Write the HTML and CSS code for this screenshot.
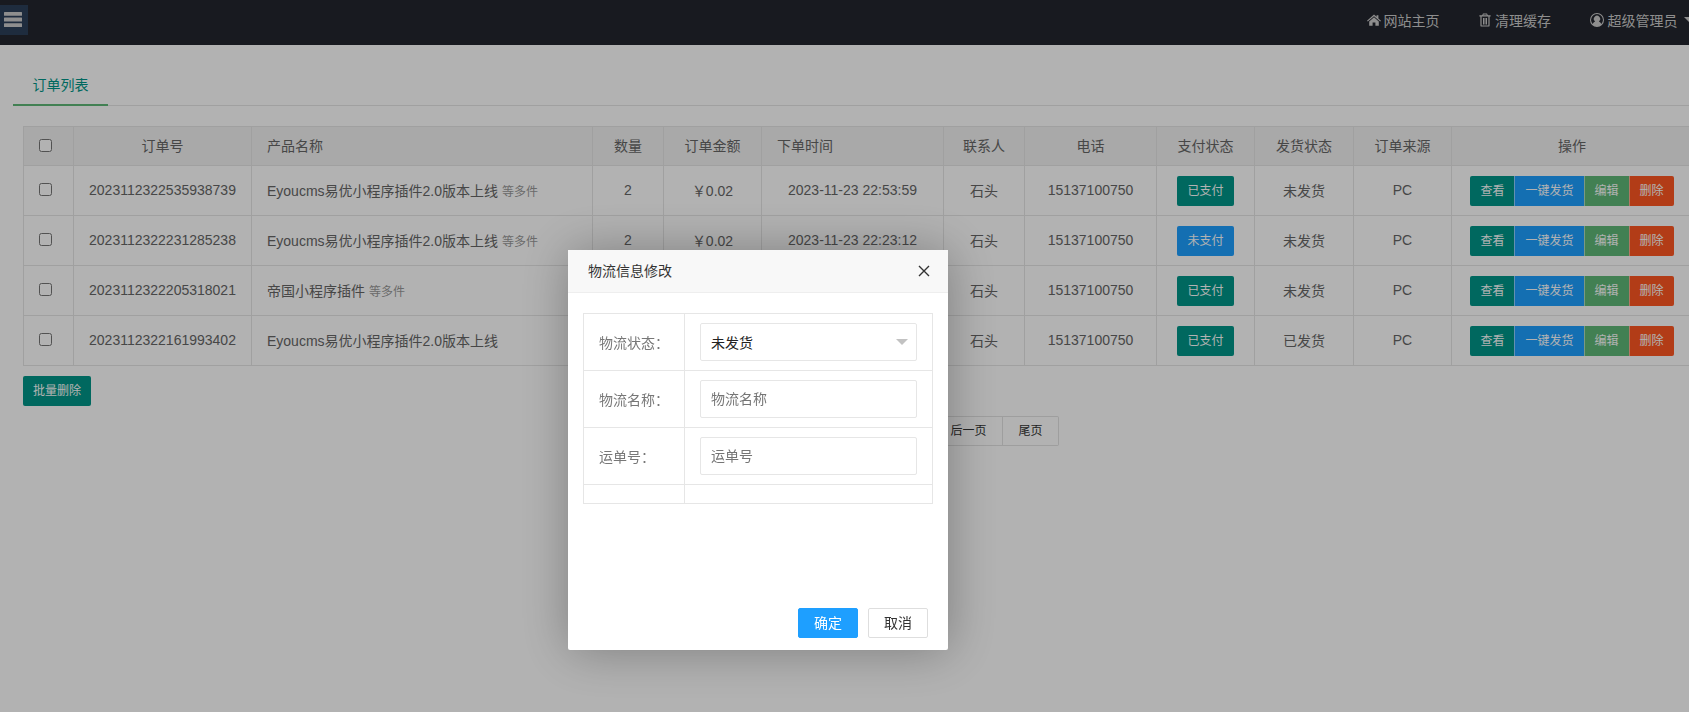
FILE: index.html
```html
<!DOCTYPE html>
<html lang="zh-CN">
<head>
    <meta charset="UTF-8">
    <title>订单列表</title>
    <link rel="stylesheet" href="styles.css">
</head>
<body>
    <!-- Top bar -->
    <header class="topbar">
        <div class="menu-toggle">
            <svg class="menu-icon" viewBox="0 0 18 15"><rect y="0" width="18" height="3.8" rx="0.5"/><rect y="5.6" width="18" height="3.8" rx="0.5"/><rect y="11.2" width="18" height="3.8" rx="0.5"/></svg>
        </div>
        <nav class="top-nav">
            <a href="#" class="top-link">
                <svg class="top-icon" viewBox="0 0 14 12"><path d="M7 0.5 L9.6 2.8 V1.2 H11.4 V4.4 L14 6.7 L13.2 7.6 L7 2.3 L0.8 7.6 L0 6.7 Z M2.2 7.4 L7 3.3 L11.8 7.4 V11.8 H8.4 V8.4 H5.6 V11.8 H2.2 Z"/></svg>
                网站主页
            </a>
            <a href="#" class="top-link">
                <svg class="top-icon" viewBox="0 0 12 14"><path fill-rule="evenodd" d="M4 0.5 H8 L8.8 2.2 H11.6 V3.4 H10.6 V12.4 Q10.6 13.6 9.4 13.6 H2.6 Q1.4 13.6 1.4 12.4 V3.4 H0.4 V2.2 H3.2 Z M4.6 1.4 L4.2 2.2 H7.8 L7.4 1.4 Z M2.6 3.4 V12.4 H9.4 V3.4 Z M4 5 H5 V11.4 H4 Z M5.5 5 H6.5 V11.4 H5.5 Z M7 5 H8 V11.4 H7 Z"/></svg>
                清理缓存
            </a>
            <a href="#" class="top-link">
                <svg class="top-icon user-icon" viewBox="0 0 14 14"><path fill-rule="evenodd" d="M7 0 A7 7 0 1 1 7 14 A7 7 0 1 1 7 0 Z M7 1.1 A5.9 5.9 0 0 0 2.6 10.9 Q3.4 8.9 5.1 8.4 A3.1 3.1 0 1 1 8.9 8.4 Q10.6 8.9 11.4 10.9 A5.9 5.9 0 0 0 7 1.1 Z"/></svg>
                超级管理员
                <span class="caret"></span>
            </a>
        </nav>
    </header>

    <main class="content">
        <div class="tab-title">
            <span class="tab-item">订单列表</span>
        </div>

        <table class="order-table">
            <colgroup>
                <col class="col-check"><col class="col-no"><col class="col-name"><col class="col-qty">
                <col class="col-amount"><col class="col-date"><col class="col-contact"><col class="col-phone">
                <col class="col-pay"><col class="col-ship"><col class="col-source"><col class="col-actions">
            </colgroup>
            <thead>
                <tr>
                    <th class="left"><input type="checkbox"></th>
                    <th>订单号</th>
                    <th class="left">产品名称</th>
                    <th>数量</th>
                    <th>订单金额</th>
                    <th class="left">下单时间</th>
                    <th>联系人</th>
                    <th>电话</th>
                    <th>支付状态</th>
                    <th>发货状态</th>
                    <th>订单来源</th>
                    <th>操作</th>
                </tr>
            </thead>
            <tbody>
                <tr>
                    <td class="left"><input type="checkbox"></td>
                    <td>2023112322535938739</td>
                    <td class="left">Eyoucms易优小程序插件2.0版本上线 <small>等多件</small></td>
                    <td>2</td>
                    <td>￥0.02</td>
                    <td>2023-11-23 22:53:59</td>
                    <td>石头</td>
                    <td>15137100750</td>
                    <td><a href="#" class="btn btn-teal">已支付</a></td>
                    <td>未发货</td>
                    <td>PC</td>
                    <td>
                        <div class="btn-group"><a href="#" class="btn btn-teal">查看</a><a href="#" class="btn btn-blue">一键发货</a><a href="#" class="btn btn-green">编辑</a><a href="#" class="btn btn-orange">删除</a></div>
                    </td>
                </tr>
                <tr>
                    <td class="left"><input type="checkbox"></td>
                    <td>2023112322231285238</td>
                    <td class="left">Eyoucms易优小程序插件2.0版本上线 <small>等多件</small></td>
                    <td>2</td>
                    <td>￥0.02</td>
                    <td>2023-11-23 22:23:12</td>
                    <td>石头</td>
                    <td>15137100750</td>
                    <td><a href="#" class="btn btn-blue">未支付</a></td>
                    <td>未发货</td>
                    <td>PC</td>
                    <td>
                        <div class="btn-group"><a href="#" class="btn btn-teal">查看</a><a href="#" class="btn btn-blue">一键发货</a><a href="#" class="btn btn-green">编辑</a><a href="#" class="btn btn-orange">删除</a></div>
                    </td>
                </tr>
                <tr>
                    <td class="left"><input type="checkbox"></td>
                    <td>2023112322205318021</td>
                    <td class="left">帝国小程序插件 <small>等多件</small></td>
                    <td></td>
                    <td></td>
                    <td></td>
                    <td>石头</td>
                    <td>15137100750</td>
                    <td><a href="#" class="btn btn-teal">已支付</a></td>
                    <td>未发货</td>
                    <td>PC</td>
                    <td>
                        <div class="btn-group"><a href="#" class="btn btn-teal">查看</a><a href="#" class="btn btn-blue">一键发货</a><a href="#" class="btn btn-green">编辑</a><a href="#" class="btn btn-orange">删除</a></div>
                    </td>
                </tr>
                <tr>
                    <td class="left"><input type="checkbox"></td>
                    <td>2023112322161993402</td>
                    <td class="left">Eyoucms易优小程序插件2.0版本上线</td>
                    <td></td>
                    <td></td>
                    <td></td>
                    <td>石头</td>
                    <td>15137100750</td>
                    <td><a href="#" class="btn btn-teal">已支付</a></td>
                    <td>已发货</td>
                    <td>PC</td>
                    <td>
                        <div class="btn-group"><a href="#" class="btn btn-teal">查看</a><a href="#" class="btn btn-blue">一键发货</a><a href="#" class="btn btn-green">编辑</a><a href="#" class="btn btn-orange">删除</a></div>
                    </td>
                </tr>
            </tbody>
        </table>

        <div class="batch-bar">
            <a href="#" class="btn btn-teal">批量删除</a>
        </div>

        <div class="pager">
            <a href="#" class="pager-item">后一页</a>
            <a href="#" class="pager-item pager-short">尾页</a>
        </div>
    </main>

    <!-- Modal -->
    <div class="shade"></div>
    <div class="modal">
        <div class="modal-title">
            <span>物流信息修改</span>
            <svg class="modal-close" viewBox="0 0 12 12"><path d="M1 1 L11 11 M11 1 L1 11"/></svg>
        </div>
        <div class="modal-body">
            <table class="form-table">
                <colgroup><col class="form-label-col"><col></colgroup>
                <tr>
                    <td class="form-label">物流状态：</td>
                    <td>
                        <div class="fake-select">未发货<span class="select-arrow"></span></div>
                    </td>
                </tr>
                <tr>
                    <td class="form-label">物流名称：</td>
                    <td><input class="form-input" type="text" placeholder="物流名称"></td>
                </tr>
                <tr>
                    <td class="form-label">运单号：</td>
                    <td><input class="form-input" type="text" placeholder="运单号"></td>
                </tr>
                <tr class="form-empty">
                    <td></td>
                    <td></td>
                </tr>
            </table>
        </div>
        <div class="modal-footer">
            <a href="#" class="modal-btn modal-btn-primary">确定</a>
            <a href="#" class="modal-btn">取消</a>
        </div>
    </div>
</body>
</html>
```

FILE: styles.css
```css
/* Global Styles */
:root {
    --teal: #009688;
    --blue: #1e9fff;
    --green: #5fb878;
    --orange: #ff5722;
    --border: #e6e6e6;
    --text: #666;
}

html, body {
    height: 100%;
}

body {
    margin: 0;
    overflow: hidden;
    background-color: #fff;
    color: var(--text);
    font-family: "Liberation Sans", "Noto Sans CJK SC", sans-serif;
    font-size: 14px;
}

a {
    text-decoration: none;
    color: inherit;
}

/* Top bar */
.topbar {
    width: 1705px;
    height: 45px;
    display: flex;
    justify-content: space-between;
    background-color: #23262e;
}

.menu-toggle {
    width: 28px;
    height: 30px;
    margin-top: 5px;
    background-color: #2c3f5a;
}

.menu-icon {
    display: block;
    width: 18px;
    height: 15px;
    margin: 7px 0 0 4px;
    fill: #ccc;
}

.top-nav {
    display: flex;
    height: 39px;
    align-items: center;
    padding-right: 9.5px;
}

.top-link {
    display: flex;
    align-items: center;
    margin-left: 38.5px;
    color: #ccc;
}

.top-icon {
    width: 14px;
    height: 14px;
    margin-right: 3px;
    fill: #ccc;
}

.user-icon {
    margin-right: 4px;
}

.caret {
    width: 0;
    height: 0;
    margin-left: 6px;
    border-style: solid;
    border-width: 6px 6px 0;
    border-color: #ccc transparent transparent;
}

/* Tabs */
.content {
    width: 1692px;
}

.tab-title {
    display: flex;
    width: 1692px;
    height: 40px;
    margin: 20px 0 0 13px;
    border-bottom: 1px solid var(--border);
}

.tab-item {
    width: 95px;
    height: 41px;
    line-height: 40px;
    box-sizing: border-box;
    border-bottom: 2px solid var(--green);
    text-align: center;
    color: var(--teal);
}

/* Table */
.order-table {
    width: 1669px;
    margin: 20px 0 0 23px;
    table-layout: fixed;
    border-collapse: collapse;
}

.col-check { width: 50px; }
.col-no { width: 178px; }
.col-name { width: 341px; }
.col-qty { width: 71px; }
.col-amount { width: 98px; }
.col-date { width: 182px; }
.col-contact { width: 81px; }
.col-phone { width: 132px; }
.col-pay { width: 98px; }
.col-ship { width: 99px; }
.col-source { width: 98px; }
.col-actions { width: 241px; }

.order-table th,
.order-table td {
    padding: 0 15px 2px;
    border: 1px solid var(--border);
    text-align: center;
    font-weight: 400;
    white-space: nowrap;
}

.order-table th {
    height: 36px;
    background-color: #f2f2f2;
}

.order-table td {
    height: 47px;
}

.order-table th.left,
.order-table td.left {
    text-align: left;
}

.order-table input[type="checkbox"] {
    display: block;
    margin: 0;
}

.order-table small {
    font-size: 12px;
    color: #999;
}

/* Buttons */
.btn {
    display: inline-block;
    height: 30px;
    line-height: 30px;
    padding: 0 10px;
    border-radius: 2px;
    font-size: 12px;
    color: #fff;
    vertical-align: middle;
}

.order-table .btn,
.order-table .btn-group {
    margin-top: 2px;
}

.order-table .btn-group .btn {
    margin-top: 0;
}

.btn-teal { background-color: var(--teal); }
.btn-blue { background-color: var(--blue); }
.btn-green { background-color: var(--green); }
.btn-orange { background-color: var(--orange); }

.btn-group {
    display: inline-flex;
    vertical-align: middle;
}

.btn-group .btn {
    border-radius: 0;
}

.btn-group .btn + .btn {
    border-left: 1px solid rgba(255, 255, 255, 0.5);
}

.btn-group .btn:first-child {
    border-radius: 2px 0 0 2px;
}

.btn-group .btn:last-child {
    border-radius: 0 2px 2px 0;
}

.batch-bar {
    margin: 10px 0 0 23px;
    height: 30px;
}

/* Pager */
.pager {
    display: flex;
    justify-content: flex-end;
    width: 1059px;
    margin-top: 10px;
    font-size: 12px;
}

.pager-item {
    width: 67px;
    height: 28px;
    line-height: 28px;
    text-align: center;
    border: 1px solid #e2e2e2;
    border-left: none;
    color: #333;
}

.pager-short {
    width: 55px;
}

.pager-item:last-child {
    border-radius: 0 2px 2px 0;
}

/* Modal */
.shade {
    position: fixed;
    top: 0;
    left: 0;
    width: 100%;
    height: 100%;
    background-color: rgba(0, 0, 0, 0.3);
}

.modal {
    position: fixed;
    top: 250px;
    left: 568px;
    width: 380px;
    height: 400px;
    display: flex;
    flex-direction: column;
    background-color: #fff;
    border-radius: 2px;
    box-shadow: 1px 1px 50px rgba(0, 0, 0, 0.3);
}

.modal-title {
    display: flex;
    justify-content: space-between;
    align-items: center;
    height: 40px;
    padding: 0 18px 2px 20px;
    background-color: #f8f8f8;
    border-bottom: 1px solid #eee;
    color: #333;
}

.modal-close {
    width: 12px;
    height: 12px;
    margin-top: 2px;
    fill: none;
    stroke: #333;
    stroke-width: 1.4;
}

.modal-body {
    flex: 1;
    padding: 20px 15px 0;
}

.form-table {
    width: 350px;
    table-layout: fixed;
    border-collapse: collapse;
}

.form-label-col {
    width: 101px;
}

.form-table td {
    height: 57px;
    padding: 0 15px;
    border: 1px solid var(--border);
    box-sizing: border-box;
}

.form-table .form-empty td {
    height: 19px;
}

.form-label {
    color: #777;
}

.fake-select,
.form-input {
    display: block;
    width: 217px;
    height: 38px;
    box-sizing: border-box;
    padding: 0 10px;
    border: 1px solid var(--border);
    border-radius: 2px;
    background-color: #fff;
    font-family: inherit;
    font-size: 14px;
    outline: none;
}

.fake-select {
    position: relative;
    line-height: 38px;
    color: #222;
}

.form-input::placeholder {
    color: #757575;
}

.select-arrow {
    position: absolute;
    top: 15px;
    right: 8px;
    width: 0;
    height: 0;
    border-style: solid;
    border-width: 6px 6px 0;
    border-color: #c2c2c2 transparent transparent;
}

.modal-footer {
    display: flex;
    justify-content: flex-end;
    gap: 10px;
    padding: 0 20px 12px;
}

.modal-btn {
    width: 60px;
    height: 30px;
    box-sizing: border-box;
    line-height: 28px;
    text-align: center;
    border: 1px solid #dedede;
    border-radius: 2px;
    background-color: #fff;
    color: #333;
}

.modal-btn-primary {
    border-color: var(--blue);
    background-color: var(--blue);
    color: #fff;
}
```
